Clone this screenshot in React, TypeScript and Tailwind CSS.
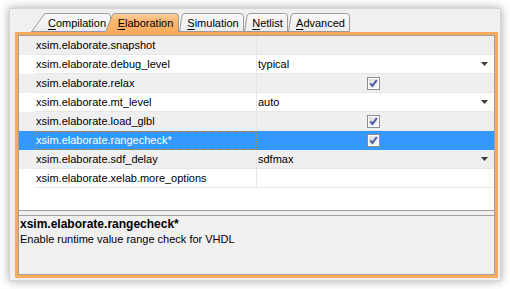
const font = { fontFamily: '"Liberation Sans", Arial, sans-serif' };

type Row = { name: string; kind: 'none' | 'combo' | 'check'; value?: string };

const rows: Row[] = [
  { name: 'xsim.elaborate.snapshot', kind: 'none' },
  { name: 'xsim.elaborate.debug_level', kind: 'combo', value: 'typical' },
  { name: 'xsim.elaborate.relax', kind: 'check' },
  { name: 'xsim.elaborate.mt_level', kind: 'combo', value: 'auto' },
  { name: 'xsim.elaborate.load_glbl', kind: 'check' },
  { name: 'xsim.elaborate.rangecheck*', kind: 'check' },
  { name: 'xsim.elaborate.sdf_delay', kind: 'combo', value: 'sdfmax' },
  { name: 'xsim.elaborate.xelab.more_options', kind: 'none' },
];

function Tab({ w, s, label, selected, z }: { w: number; s: number; label: string; selected?: boolean; z?: string }) {
  const h = 19;
  const d = `M0.5 ${h} L${s} 3 Q${s + 0.8} 0.5 ${s + 3} 0.5 L${w - 3.5} 0.5 Q${w - 0.5} 0.5 ${w - 0.5} 3.5 L${w - 0.5} ${h}`;
  return (
    <div className={`relative h-[19px] shrink-0 ${z ?? ''}`} style={{ width: w }}>
      <svg className="absolute inset-0" width={w} height={h} viewBox={`0 0 ${w} ${h}`}>
        <defs>
          <linearGradient id="sel" x1="0" y1="0" x2="0" y2="1">
            <stop offset="0" stopColor="#fcd3a6" />
            <stop offset="0.35" stopColor="#f9b875" />
            <stop offset="1" stopColor="#f8ab5e" />
          </linearGradient>
          <linearGradient id="unsel" x1="0" y1="0" x2="0" y2="1">
            <stop offset="0" stopColor="#fafafa" />
            <stop offset="1" stopColor="#ececec" />
          </linearGradient>
        </defs>
        <path d={d + ' Z'} fill={selected ? 'url(#sel)' : 'url(#unsel)'} stroke="none" />
        <path d={d} fill="none" stroke="#9b9b9b" strokeWidth="1" />
        {!selected && <line x1="0" y1={h - 0.5} x2={w} y2={h - 0.5} stroke="#9b9b9b" />}
      </svg>
      <div
        className="relative flex h-full items-center justify-center pt-[1px] text-[11px] text-black"
        style={{ paddingLeft: s }}
      >
        <span>
          <span className="underline underline-offset-2">{label[0]}</span>
          {label.slice(1)}
        </span>
      </div>
    </div>
  );
}

function Check() {
  return (
    <svg width="13" height="13" viewBox="0 0 13 13">
      <defs>
        <linearGradient id="cb" x1="0" y1="0" x2="1" y2="1">
          <stop offset="0" stopColor="#dcdcdc" />
          <stop offset="1" stopColor="#f8f8f8" />
        </linearGradient>
      </defs>
      <rect x="0.5" y="0.5" width="12" height="12" fill="#ffffff" stroke="#8e8e8e" />
      <rect x="2" y="2" width="9" height="9" fill="url(#cb)" />
      <path d="M3.3 6.4 L5.4 8.9 L9.8 3.2" fill="none" stroke="#4a5aa8" strokeWidth="1.9" />
    </svg>
  );
}

function Arrow() {
  return (
    <svg width="7" height="4" viewBox="0 0 7 4">
      <path d="M0 0 H7 L3.5 4 Z" fill="#3a3a3a" />
    </svg>
  );
}

export default function App() {
  return (
    <div className="h-[289px] w-[510px] overflow-hidden bg-white pl-[9px] pt-[8px]" style={font}>
      <div className="flex h-[273px] w-[492px] flex-col border border-[#d6d6d6] bg-[#f0f0f0] shadow-[0_0_9px_rgba(0,0,0,0.35)]">
        {/* tab strip */}
        <div className="mt-[4px] flex h-[19px] pl-[21px]">
          <Tab w={80} s={12} label="Compilation" />
          <Tab w={74} s={7} label="Elaboration" selected z="z-10 -ml-[6px]" />
          <Tab w={65} s={3} label="Simulation" />
          <Tab w={44} s={3} label="Netlist" />
          <Tab w={62} s={3} label="Advanced" />
        </div>

        {/* highlighted frame */}
        <div className="ml-[5px] h-[246px] w-[483px] border-[3px] border-[#f8aa5d]">
          <div className="flex h-full flex-col border border-[#a0a0a0]">
            <div className="h-[175px] border-b border-[#a0a0a0] bg-white">
              {rows.map((r, i) => {
                const sel = i === 5;
                const bg = sel ? 'bg-[#3399ff]' : i % 2 === 0 ? 'bg-[#efefef]' : 'bg-white';
                return (
                  <div key={r.name} className={`flex h-[19px] pl-[16px] ${bg}`}>
                    <div
                      className={`flex w-[222px] items-center border-r border-b pl-[1px] text-[11px] ${
                        sel
                          ? 'border-transparent text-white outline-1 -outline-offset-1 outline-dotted outline-[#b98a4a]'
                          : 'border-[#e6e6e6] text-black'
                      }`}
                    >
                      {r.name}
                    </div>
                    <div
                      className={`flex w-[236px] items-center border-b pl-[1px] pr-[5px] text-[11px] text-black ${
                        sel ? 'border-transparent' : 'border-[#e6e6e6]'
                      }`}
                    >
                      {r.kind === 'combo' && (
                        <>
                          <span className="flex-1">{r.value}</span>
                          <Arrow />
                        </>
                      )}
                      {r.kind === 'check' && (
                        <div className="flex flex-1 justify-center">
                          <Check />
                        </div>
                      )}
                    </div>
                  </div>
                );
              })}
            </div>
            <div className="h-[4px]" />
            <div className="flex-1 border-t border-[#a0a0a0] bg-[#f0f0f0] pl-[1px] pt-[1px] text-black">
              <div className="text-[12px] font-bold leading-[15px]">xsim.elaborate.rangecheck*</div>
              <div className="text-[11px] leading-[14px]">Enable runtime value range check for VHDL</div>
            </div>
          </div>
        </div>
      </div>
    </div>
  );
}
